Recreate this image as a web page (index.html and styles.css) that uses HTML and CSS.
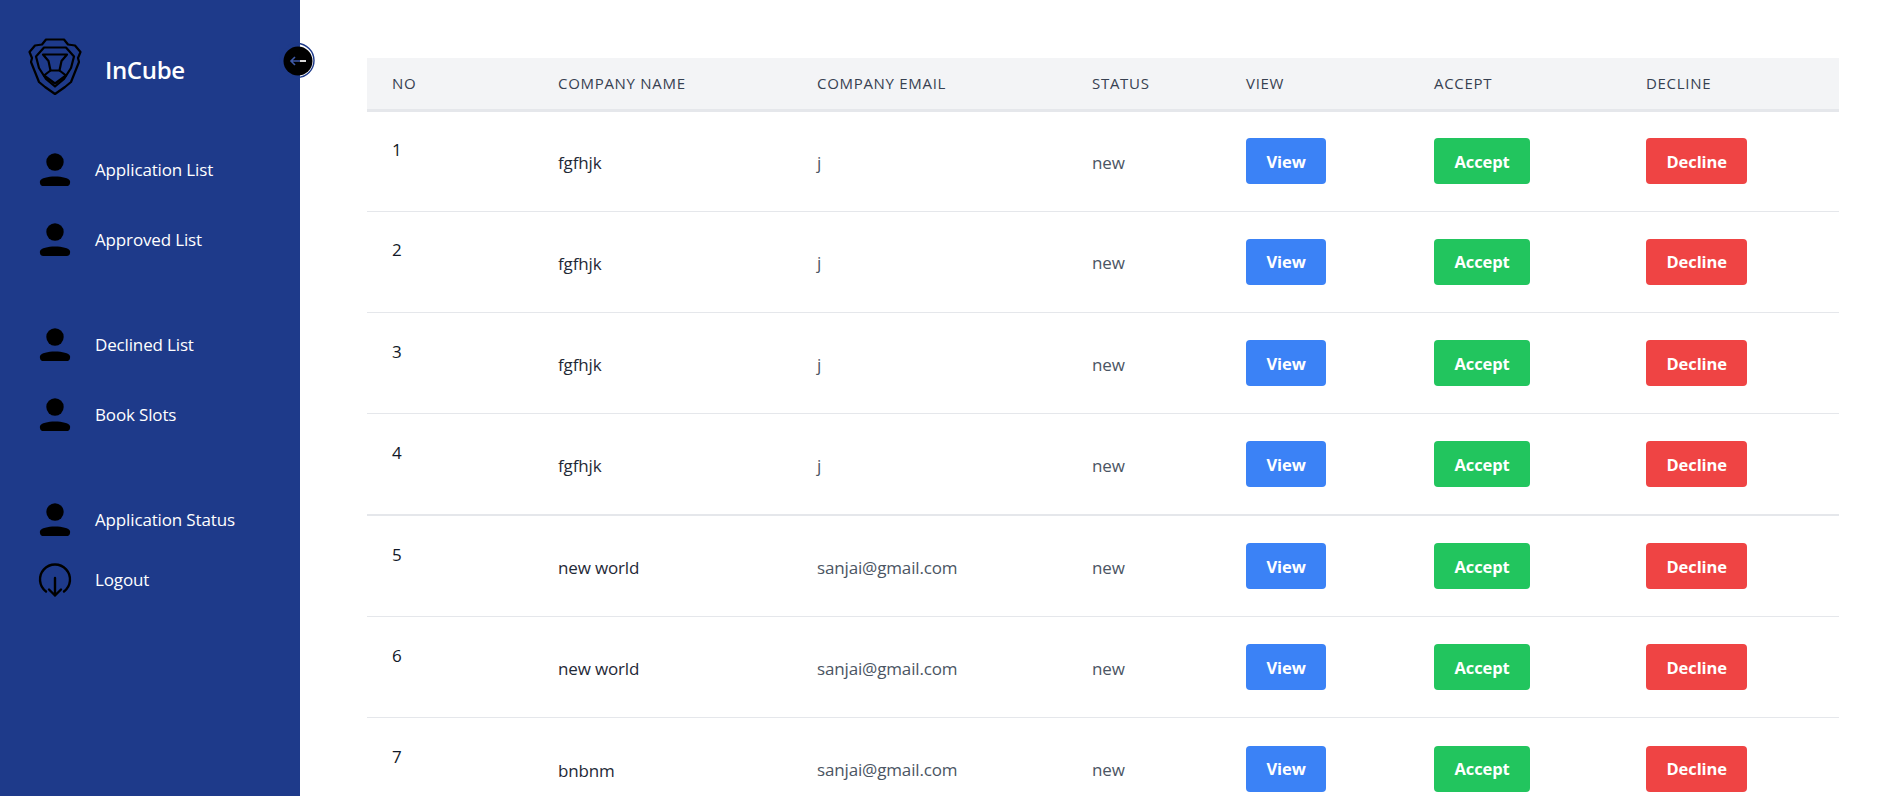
FILE: index.html
```html
<!DOCTYPE html>
<html lang="en">
<head>
<meta charset="utf-8">
<title>InCube</title>
<link rel="stylesheet" href="styles.css">
</head>
<body>
<div class="app">
  <aside class="sidebar">
    <svg class="toggle" width="40" height="40" viewBox="0 0 40 40">
      <circle cx="19" cy="19.5" r="17" fill="none" stroke="#1e3a8a" stroke-width="1.4"/>
      <circle cx="20" cy="20" r="14.5" fill="#000"/>
      <path d="M14 20H22M17 16L13 20L17 24" fill="none" stroke="#3f5aa8" stroke-width="1.6"/>
      <path d="M22 20H28" fill="none" stroke="#d8d8d8" stroke-width="2"/>
    </svg>
    <div class="brand">
      <svg class="logo" width="54" height="59" viewBox="0 0 54 59" fill="none" stroke="#000" stroke-width="2.2" stroke-linejoin="round">
        <path d="M18 2.500H36L40 7.500L47 8.500L52.500 15L50 21L51 25L43 45L37 50L27 57L17 50L11 45L3 25L4 21L1.500 15L7 8.500L14 7.500Z"/>
        <path d="M16 10.500H38L46 19.500L43 31L36 42L27 49.500L18 42L11 31L8 19.500Z"/>
        <path d="M15 17.500H39L33.500 24L31.500 33.500H22.500L20.500 24Z"/>
        <path d="M22.500 33.500L16 38.500L27 46.500L38 38.500L31.500 33.500"/>
      </svg>
      <span class="brand-name">InCube</span>
    </div>
    <nav class="nav">
      <div class="nav-group">
        <a class="nav-item"><svg class="nav-icon" width="32" height="34" viewBox="0 0 32 34"><circle cx="16" cy="9" r="8.700"/><path d="M1 28C2 25 9 23.500 16 23.500C23 23.500 30 25 31 28C31.500 31 30 33 28 33H4C2 33 .5 31 1 28Z"/></svg><span>Application List</span></a>
        <a class="nav-item"><svg class="nav-icon" width="32" height="34" viewBox="0 0 32 34"><circle cx="16" cy="9" r="8.700"/><path d="M1 28C2 25 9 23.500 16 23.500C23 23.500 30 25 31 28C31.500 31 30 33 28 33H4C2 33 .5 31 1 28Z"/></svg><span>Approved List</span></a>
      </div>
      <div class="nav-group">
        <a class="nav-item"><svg class="nav-icon" width="32" height="34" viewBox="0 0 32 34"><circle cx="16" cy="9" r="8.700"/><path d="M1 28C2 25 9 23.500 16 23.500C23 23.500 30 25 31 28C31.500 31 30 33 28 33H4C2 33 .5 31 1 28Z"/></svg><span>Declined List</span></a>
        <a class="nav-item"><svg class="nav-icon" width="32" height="34" viewBox="0 0 32 34"><circle cx="16" cy="9" r="8.700"/><path d="M1 28C2 25 9 23.500 16 23.500C23 23.500 30 25 31 28C31.500 31 30 33 28 33H4C2 33 .5 31 1 28Z"/></svg><span>Book Slots</span></a>
      </div>
      <div class="nav-group">
        <a class="nav-item"><svg class="nav-icon" width="32" height="34" viewBox="0 0 32 34"><circle cx="16" cy="9" r="8.700"/><path d="M1 28C2 25 9 23.500 16 23.500C23 23.500 30 25 31 28C31.500 31 30 33 28 33H4C2 33 .5 31 1 28Z"/></svg><span>Application Status</span></a>
        <a class="nav-item nav-item-short"><svg class="nav-icon" width="34" height="36" viewBox="0 0 34 36" fill="none" stroke="#000" stroke-width="2.400" stroke-linecap="round" stroke-linejoin="round"><path d="M8 29.500A15 15 0 1 1 26 29.500"/><path d="M17 16V33.500M11 27.500L17 33.500L23 27.500"/></svg><span>Logout</span></a>
      </div>
    </nav>
  </aside>
  <main class="main">
    <table class="data-table">
      <colgroup>
        <col class="col-no"><col class="col-name"><col class="col-email"><col class="col-status"><col class="col-view"><col class="col-accept"><col class="col-decline">
      </colgroup>
      <thead>
        <tr><th>No</th><th>Company Name</th><th>Company Email</th><th>Status</th><th>View</th><th>Accept</th><th>Decline</th></tr>
      </thead>
      <tbody>
        <tr><td class="cell-no">1</td><td class="cell-name">fgfhjk</td><td class="cell-muted">j</td><td class="cell-muted">new</td><td><button class="btn btn-view">View</button></td><td><button class="btn btn-accept">Accept</button></td><td><button class="btn btn-decline">Decline</button></td></tr>
        <tr><td class="cell-no">2</td><td class="cell-name">fgfhjk</td><td class="cell-muted">j</td><td class="cell-muted">new</td><td><button class="btn btn-view">View</button></td><td><button class="btn btn-accept">Accept</button></td><td><button class="btn btn-decline">Decline</button></td></tr>
        <tr><td class="cell-no">3</td><td class="cell-name">fgfhjk</td><td class="cell-muted">j</td><td class="cell-muted">new</td><td><button class="btn btn-view">View</button></td><td><button class="btn btn-accept">Accept</button></td><td><button class="btn btn-decline">Decline</button></td></tr>
        <tr class="row-divider"><td class="cell-no">4</td><td class="cell-name">fgfhjk</td><td class="cell-muted">j</td><td class="cell-muted">new</td><td><button class="btn btn-view">View</button></td><td><button class="btn btn-accept">Accept</button></td><td><button class="btn btn-decline">Decline</button></td></tr>
        <tr><td class="cell-no">5</td><td class="cell-name">new world</td><td class="cell-muted">sanjai@gmail.com</td><td class="cell-muted">new</td><td><button class="btn btn-view">View</button></td><td><button class="btn btn-accept">Accept</button></td><td><button class="btn btn-decline">Decline</button></td></tr>
        <tr><td class="cell-no">6</td><td class="cell-name">new world</td><td class="cell-muted">sanjai@gmail.com</td><td class="cell-muted">new</td><td><button class="btn btn-view">View</button></td><td><button class="btn btn-accept">Accept</button></td><td><button class="btn btn-decline">Decline</button></td></tr>
        <tr><td class="cell-no">7</td><td class="cell-name">bnbnm</td><td class="cell-muted">sanjai@gmail.com</td><td class="cell-muted">new</td><td><button class="btn btn-view">View</button></td><td><button class="btn btn-accept">Accept</button></td><td><button class="btn btn-decline">Decline</button></td></tr>
      </tbody>
    </table>
  </main>
</div>
</body>
</html>
```

FILE: styles.css
```css
* { box-sizing: border-box; }
html, body { margin: 0; height: 100%; overflow: hidden; background: #fff; }
body { font-family: "Open Sans", "Noto Sans", sans-serif; font-size: 17px; letter-spacing: -.15px; color: #111827; }

.app { display: flex; height: 100vh; }

.sidebar { position: relative; flex: 0 0 300px; background: #1e3a8a; padding-top: 37px; }
.toggle { position: absolute; top: 41px; right: -18px; }

.brand { display: flex; align-items: flex-start; padding-left: 28px; height: 98px; }
.logo { flex: none; }
.brand-name { margin: 16px 0 0 23px; font-size: 24px; line-height: 34px; font-weight: 600; color: #fff; letter-spacing: -.35px; }

.nav { display: flex; flex-direction: column; gap: 35px; }
.nav-group { display: flex; flex-direction: column; }
.nav-item { display: flex; align-items: center; height: 70px; padding-left: 39px; color: #fff; }
.nav-item-short { height: 50px; }
.nav-item span { margin-left: 24px; padding-bottom: 2px; }
.nav-icon { flex: none; fill: #000; }
.nav-item-short .nav-icon { fill: none; margin-left: -1px; margin-right: -1px; }

.main { flex: 1; min-width: 0; padding: 58px 53px 0 67px; }

.data-table { width: 1472px; border-collapse: collapse; table-layout: fixed; }
.col-no { width: 167px; }
.col-name { width: 259px; }
.col-email { width: 275px; }
.col-status { width: 154px; }
.col-view { width: 188px; }
.col-accept { width: 212px; }
.col-decline { width: 217px; }

.data-table th { height: 52px; padding: 0 24px; background: #f3f4f6; border-bottom: 3px solid #e5e7eb; text-align: left; font-size: 15px; font-weight: 500; letter-spacing: .7px; text-transform: uppercase; color: #374151; }
.data-table td { height: 101.330px; padding: 0 24px; border-bottom: 1px solid #e5e7eb; vertical-align: middle; }
.data-table th:first-child, .data-table td:first-child { padding-left: 25px; }
.data-table .row-divider td { border-bottom-width: 2px; }

.data-table .cell-no { padding-bottom: 24px; color: #111827; }
.data-table .cell-name { padding-top: 3px; color: #1f2937; }
.data-table .cell-muted { padding-top: 2px; color: #4b5563; }

.btn { display: block; height: 46px; padding: 0 20.500px; border: 0; border-radius: 4px; font: 700 16.500px "Open Sans", "Noto Sans", sans-serif; letter-spacing: -.1px; color: #fff; }
.btn-view { background: #3b82f6; }
.btn-accept { background: #22c55e; }
.btn-decline { background: #ef4444; }
```
